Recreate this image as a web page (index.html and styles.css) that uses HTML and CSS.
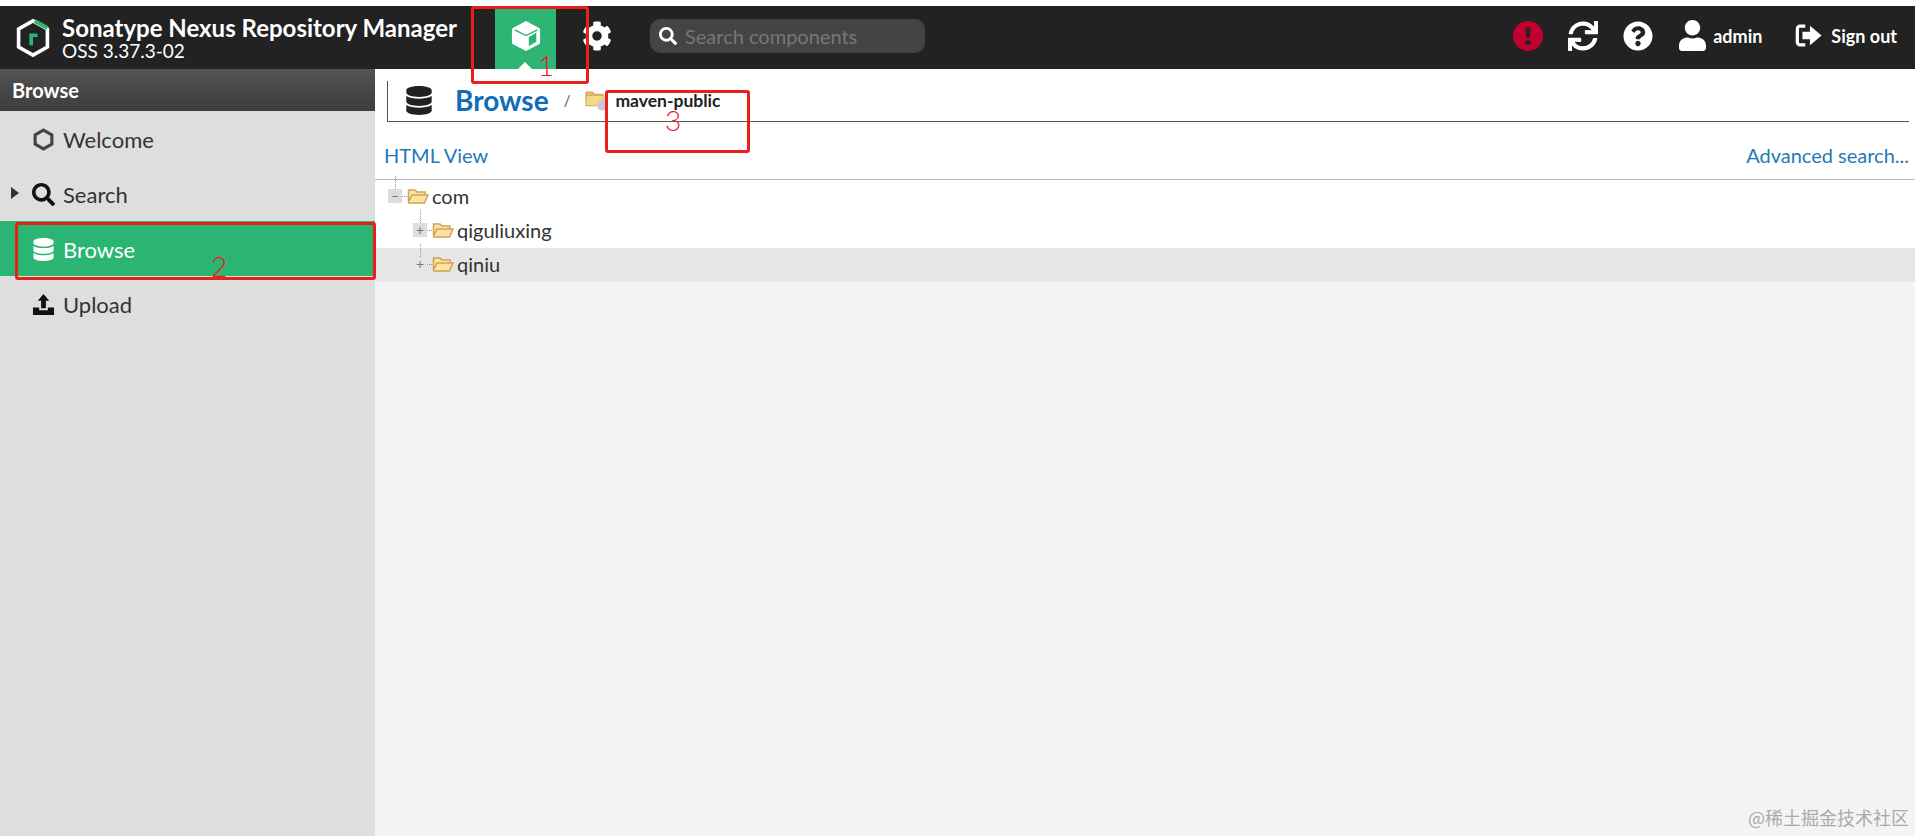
FILE: index.html
```html
<!DOCTYPE html>
<html lang="en">
<head>
  <meta charset="UTF-8">
  <title>Browse - Nexus Repository Manager</title>
  <link rel="stylesheet" href="styles.css">
</head>
<body>
  <!-- Top toolbar -->
  <header class="toolbar">
    <svg class="logo" viewBox="0 0 40 44">
      <path d="M20 3 36 12V32L20 41 4 32V12Z" fill="none" stroke="#fff" stroke-width="4"/>
      <path d="M22 3 36 11" fill="none" stroke="#2db573" stroke-width="4.5"/>
      <path d="M16 30V17H25V21H20V30Z" fill="#2db573"/>
    </svg>
    <div class="brand">
      <div class="brand-name">Sonatype Nexus Repository Manager</div>
      <div class="brand-version">OSS 3.37.3-02</div>
    </div>
    <div class="mode-tab">
      <svg class="icon-cube" viewBox="0 0 32 34">
        <path d="M16 1 30 8.500a2 2 0 0 1 1 1.700V24a2 2 0 0 1-1 1.700L16 33 2 25.700A2 2 0 0 1 1 24V10.200a2 2 0 0 1 1-1.700Z" fill="#fff"/>
        <path d="M19 18 27 13.500V23L19 28Z" fill="#2db573"/>
        <path d="M4 10.500 16 16.500 28 10.500" fill="none" stroke="#2db573" stroke-width="1.500"/>
      </svg>
    </div>
    <div class="mode-gear">
      <svg class="icon-gear" viewBox="0 0 512 512"><path fill="#fff" d="M487.4 315.7l-42.6-24.6c4.3-23.2 4.3-47 0-70.2l42.6-24.6c4.900-2.800 7.100-8.600 5.500-14-11.100-35.600-30-67.800-54.700-94.600-3.800-4.100-10-5.100-14.800-2.300L380.800 110c-17.900-15.400-38.500-27.300-60.800-35.100V25.800c0-5.600-3.900-10.500-9.400-11.700-36.700-8.200-74.300-7.800-109.200 0-5.500 1.200-9.400 6.100-9.400 11.700V75c-22.200 7.900-42.800 19.800-60.800 35.100L88.700 85.500c-4.900-2.800-11-1.900-14.800 2.300-24.700 26.700-43.600 58.900-54.700 94.600-1.700 5.400.6 11.200 5.500 14L67.300 221c-4.300 23.200-4.300 47 0 70.200l-42.600 24.600c-4.900 2.800-7.100 8.600-5.500 14 11.100 35.600 30 67.800 54.700 94.600 3.800 4.100 10 5.100 14.800 2.300l42.600-24.600c17.900 15.400 38.500 27.300 60.800 35.100v49.200c0 5.600 3.900 10.500 9.400 11.700 36.700 8.200 74.300 7.800 109.200 0 5.500-1.200 9.400-6.100 9.400-11.700v-49.200c22.200-7.900 42.800-19.800 60.800-35.100l42.600 24.600c4.900 2.800 11 1.900 14.800-2.300 24.700-26.700 43.600-58.900 54.700-94.600 1.500-5.500-.7-11.300-5.600-14.100zM256 336c-44.100 0-80-35.900-80-80s35.900-80 80-80 80 35.900 80 80-35.900 80-80 80z"/></svg>
    </div>
    <div class="search-box">
      <svg class="icon-18" viewBox="0 0 512 512"><path fill="#fff" d="M505 442.700L405.300 343c-4.500-4.500-10.600-7-17-7H372c27.600-35.300 44-79.700 44-128C416 93.100 322.900 0 208 0S0 93.100 0 208s93.100 208 208 208c48.300 0 92.700-16.400 128-44v16.300c0 6.400 2.500 12.500 7 17l99.700 99.700c9.400 9.400 24.600 9.400 33.900 0l28.300-28.300c9.400-9.400 9.400-24.600.1-34zM208 336c-70.700 0-128-57.200-128-128 0-70.700 57.200-128 128-128 70.700 0 128 57.200 128 128 0 70.700-57.200 128-128 128z"/></svg>
      <span class="search-text">Search components</span>
    </div>
    <div class="toolbar-right">
      <svg class="icon-alert" viewBox="0 0 30 30">
        <circle cx="15" cy="15" r="15" fill="#c0002f"/>
        <path d="M12.500 6.500H17.500L16.700 17H13.300Z" fill="#222"/>
        <circle cx="15" cy="21.500" r="2.600" fill="#222"/>
      </svg>
      <svg class="icon-sync" viewBox="0 0 512 512"><path fill="#fff" d="M440.650 12.570l4 82.770A247.160 247.160 0 0 0 255.830 8C134.730 8 33.910 94.920 12.290 209.820A12 12 0 0 0 24.090 224h49.050a12 12 0 0 0 11.670-9.260 175.910 175.910 0 0 1 317-56.940l-101.460-4.860a12 12 0 0 0-12.570 12v47.410a12 12 0 0 0 12 12H500a12 12 0 0 0 12-12V12a12 12 0 0 0-12-12h-47.370a12 12 0 0 0-11.980 12.570zM255.830 432a175.610 175.610 0 0 1-146-77.800l101.800 4.870a12 12 0 0 0 12.570-12v-47.400a12 12 0 0 0-12-12H12a12 12 0 0 0-12 12V500a12 12 0 0 0 12 12h47.350a12 12 0 0 0 12-12.600l-4.150-82.570A247.170 247.170 0 0 0 255.830 504c121.110 0 221.930-86.920 243.550-201.820a12 12 0 0 0-11.800-14.180h-49.050a12 12 0 0 0-11.670 9.260A175.860 175.860 0 0 1 255.830 432z"/></svg>
      <svg class="icon-help" viewBox="0 0 512 512"><path fill="#fff" d="M504 256c0 136.997-111.043 248-248 248S8 392.997 8 256C8 119.083 119.043 8 256 8s248 111.083 248 248zM262.655 90c-54.497 0-89.255 22.957-116.549 63.758-3.536 5.286-2.353 12.415 2.715 16.258l34.699 26.310c5.205 3.947 12.621 3.008 16.665-2.122 17.864-22.658 30.113-35.797 57.303-35.797 20.429 0 45.698 13.148 45.698 32.958 0 14.976-12.363 22.667-32.534 33.976C247.128 238.528 216 254.941 216 296v4c0 6.627 5.373 12 12 12h56c6.627 0 12-5.373 12-12v-1.333c0-28.462 83.186-29.647 83.186-106.667 0-58.002-60.165-102-116.531-102zM256 338c-25.365 0-46 20.635-46 46 0 25.364 20.635 46 46 46s46-20.636 46-46c0-25.365-20.635-46-46-46z"/></svg>
      <svg class="icon-user" viewBox="0 0 448 512"><path fill="#fff" d="M224 256c70.700 0 128-57.300 128-128S294.700 0 224 0 96 57.300 96 128s57.300 128 128 128zm89.600 32h-16.700c-22.200 10.200-46.900 16-72.900 16s-50.600-5.800-72.900-16h-16.700C60.200 288 0 348.200 0 422.400V464c0 26.500 21.500 48 48 48h352c26.500 0 48-21.500 48-48v-41.600c0-74.200-60.200-134.400-134.400-134.400z"/></svg>
      <span class="tool-label label-admin">admin</span>
      <svg class="icon-signout" viewBox="0 0 30 26">
        <path d="M11 3H5.500A3 3 0 0 0 2.500 6V20A3 3 0 0 0 5.500 23H11" fill="none" stroke="#fff" stroke-width="3.500"/>
        <path d="M8 9H16V2.500L28.500 13 16 23.500V17H8Z" fill="#fff"/>
      </svg>
      <span class="tool-label">Sign out</span>
    </div>
  </header>

  <div class="layout">
    <!-- Left navigation -->
    <aside class="sidebar">
      <div class="sidebar-title">Browse</div>
      <div class="nav-item">
        <svg class="nav-icon" viewBox="2 1 20 22"><path d="M12 3 20 7.500V16.500L12 21 4 16.500V7.500Z" fill="none" stroke="#444" stroke-width="3"/></svg>
        <span>Welcome</span>
      </div>
      <div class="nav-item">
        <span class="nav-arrow"></span>
        <svg class="nav-icon" viewBox="0 0 512 512"><path fill="#111" d="M505 442.700L405.300 343c-4.500-4.500-10.600-7-17-7H372c27.600-35.300 44-79.700 44-128C416 93.100 322.900 0 208 0S0 93.100 0 208s93.100 208 208 208c48.300 0 92.700-16.400 128-44v16.300c0 6.400 2.500 12.500 7 17l99.700 99.700c9.400 9.400 24.600 9.400 33.900 0l28.300-28.300c9.400-9.400 9.400-24.600.1-34zM208 336c-70.700 0-128-57.200-128-128 0-70.700 57.200-128 128-128 70.700 0 128 57.200 128 128 0 70.700-57.200 128-128 128z"/></svg>
        <span>Search</span>
      </div>
      <div class="nav-item nav-active">
        <svg class="nav-icon" viewBox="0 0 448 512"><path fill="#fff" d="M448 73.143v45.714C448 159.143 347.667 192 224 192S0 159.143 0 118.857V73.143C0 32.857 100.333 0 224 0s224 32.857 224 73.143zM448 176v102.857C448 319.143 347.667 352 224 352S0 319.143 0 278.857V176c48.125 33.143 136.208 48.572 224 48.572S399.875 209.143 448 176zm0 160v102.857C448 479.143 347.667 512 224 512S0 479.143 0 438.857V336c48.125 33.143 136.208 48.572 224 48.572S399.875 369.143 448 336z"/></svg>
        <span>Browse</span>
      </div>
      <div class="nav-item">
        <svg class="nav-icon" viewBox="0 0 24 24"><path fill="#111" d="M12 1 18 8H14.500V16H9.500V8H6ZM1 15H7.500V18H16.500V15H23V23H1Z"/></svg>
        <span>Upload</span>
      </div>
    </aside>

    <!-- Main panel -->
    <main class="content">
      <div class="white-top">
        <div class="breadcrumb">
          <svg class="crumb-icon" viewBox="0 0 448 512"><path fill="#222" d="M448 73.143v45.714C448 159.143 347.667 192 224 192S0 159.143 0 118.857V73.143C0 32.857 100.333 0 224 0s224 32.857 224 73.143zM448 176v102.857C448 319.143 347.667 352 224 352S0 319.143 0 278.857V176c48.125 33.143 136.208 48.572 224 48.572S399.875 209.143 448 176zm0 160v102.857C448 479.143 347.667 512 224 512S0 479.143 0 438.857V336c48.125 33.143 136.208 48.572 224 48.572S399.875 369.143 448 336z"/></svg>
          <span class="crumb-title">Browse</span>
          <span class="crumb-sep">/</span>
          <svg class="crumb-folder" viewBox="0 0 22 20">
            <path d="M1 2H7L9 4H17V8H1Z" fill="#e8c26e" stroke="#cfa354"/>
            <path d="M1 5H18V15H1Z" fill="#f6d888" stroke="#d3a75a"/>
            <ellipse cx="16.500" cy="14.500" rx="5" ry="5" fill="#c6ccd2"/>
          </svg>
          <span class="crumb-repo">maven-public</span>
        </div>
        <div class="link-bar">
          <span class="link">HTML View</span>
          <span class="link">Advanced search...</span>
        </div>
      </div>
      <div class="tree">
        <div class="tree-row">
          <span class="tree-toggle toggle-box">&minus;</span>
          <svg class="folder" viewBox="0 0 22 18"><path d="M1.500 15V3H8L10 5H18V8H5L1.500 15 5 8H21L17.500 16H2Z" fill="#fbe3a4" stroke="#cfa354" stroke-width="1.500"/></svg>
          <span>com</span>
        </div>
        <div class="tree-row row-child">
          <span class="tree-toggle toggle-box">+</span>
          <svg class="folder" viewBox="0 0 22 18"><path d="M1.500 15V3H8L10 5H18V8H5L1.500 15 5 8H21L17.500 16H2Z" fill="#fbe3a4" stroke="#cfa354" stroke-width="1.500"/></svg>
          <span>qiguliuxing</span>
        </div>
        <div class="tree-row row-child row-selected">
          <span class="tree-toggle">+</span>
          <svg class="folder" viewBox="0 0 22 18"><path d="M1.500 15V3H8L10 5H18V8H5L1.500 15 5 8H21L17.500 16H2Z" fill="#fbe3a4" stroke="#cfa354" stroke-width="1.500"/></svg>
          <span>qiniu</span>
        </div>
      </div>
    </main>
  </div>

  <!-- Red annotations drawn over the screenshot -->
  <div class="mark mark-one"></div>
  <div class="mark mark-two"></div>
  <div class="mark mark-three"></div>
  <span class="mark-num num-one">1</span>
  <span class="mark-num num-two">2</span>
  <span class="mark-num num-three">3</span>
  <span class="watermark">@稀土掘金技术社区</span>
</body>
</html>
```

FILE: styles.css
```css
html, body {
  height: 100%;
}
body {
  margin: 0;
  padding-top: 6px;
  box-sizing: border-box;
  background-color: #fff;
  color: #333;
  font-family: "Lato", "Noto Sans", sans-serif;
  overflow: hidden;
}
svg {
  display: block;
  flex: none;
}

/* Toolbar */
.toolbar {
  display: flex;
  align-items: center;
  height: 63px;
  background-color: #222;
  color: #fff;
}
.logo {
  width: 36px;
  height: 42px;
  margin-left: 15px;
}
.brand {
  margin-left: 11px;
  width: 433px;
}
.brand-name {
  font-size: 24px;
  font-weight: 700;
  line-height: 26px;
}
.brand-version {
  font-size: 19px;
  line-height: 20px;
}
.mode-tab {
  position: relative;
  display: flex;
  align-items: center;
  justify-content: center;
  align-self: stretch;
  width: 61px;
  padding-bottom: 4px;
  box-sizing: border-box;
  background-color: #2db573;
}
.mode-tab::after {
  content: "";
  position: absolute;
  left: 23px;
  bottom: 0;
  border: 7px solid transparent;
  border-top: 0;
  border-bottom-color: #fff;
}
.icon-cube {
  width: 30px;
  height: 32px;
}
.mode-gear {
  width: 30px;
  margin-left: 26px;
  margin-bottom: 4px;
}
.icon-gear {
  width: 30px;
  height: 30px;
}
.search-box {
  display: flex;
  align-items: center;
  gap: 8px;
  width: 275px;
  height: 34px;
  margin-left: 38px;
  margin-bottom: 3px;
  padding-left: 9px;
  box-sizing: border-box;
  background-color: #444;
  border-radius: 10px;
}
.icon-18 {
  width: 18px;
  height: 18px;
}
.search-text {
  color: #777;
  font-size: 20px;
}
.toolbar-right {
  display: flex;
  align-items: center;
  margin-left: auto;
  margin-bottom: 4px;
  padding-right: 18px;
}
.icon-alert {
  width: 30px;
  height: 30px;
}
.icon-sync {
  width: 30px;
  height: 30px;
  margin-left: 25px;
}
.icon-help {
  width: 30px;
  height: 30px;
  margin-left: 25px;
}
.icon-user {
  width: 27px;
  height: 31px;
  margin-left: 26px;
}
.tool-label {
  font-size: 18px;
  font-weight: 700;
}
.label-admin {
  margin-left: 7px;
}
.icon-signout {
  width: 28px;
  height: 25px;
  margin-left: 33px;
  margin-right: 8px;
}

/* Page body */
.layout {
  display: flex;
  height: calc(100% - 63px);
}
.sidebar {
  width: 375px;
  flex: none;
  background-color: #dedede;
}
.sidebar-title {
  height: 42px;
  padding-left: 12px;
  background: linear-gradient(#535353, #3d3d3d);
  color: #fff;
  font-size: 20px;
  font-weight: 700;
  line-height: 42px;
}
.nav-item {
  position: relative;
  display: flex;
  align-items: center;
  gap: 8px;
  height: 55px;
  padding-left: 32px;
  padding-top: 1px;
  box-sizing: border-box;
  color: #333;
  font-size: 22px;
}
.nav-icon {
  width: 23px;
  height: 23px;
}
.nav-arrow {
  position: absolute;
  left: 11px;
  top: 21px;
  border: 6px solid transparent;
  border-right: 0;
  border-left: 8px solid #333;
}
.nav-active {
  background-color: #2bb573;
  color: #fff;
}

/* Main panel */
.content {
  flex: 1;
  background-color: #f4f4f4;
}
.white-top {
  height: 111px;
  background-color: #fff;
  border-bottom: 1px solid #bbb;
  box-sizing: border-box;
  padding: 12px 6px 0 12px;
}
.breadcrumb {
  display: flex;
  align-items: center;
  height: 41px;
  padding-bottom: 2px;
  box-sizing: border-box;
  border-left: 1px solid #555;
  border-bottom: 1px solid #555;
}
.crumb-icon {
  width: 26px;
  height: 29px;
  margin-left: 18px;
}
.crumb-title {
  margin-left: 23px;
  color: #0f6cb8;
  font-size: 28px;
  font-weight: 700;
}
.crumb-sep {
  margin-left: 15px;
  color: #555;
  font-size: 15px;
}
.crumb-folder {
  width: 23px;
  height: 21px;
  margin-left: 15px;
}
.crumb-repo {
  margin-left: 7px;
  color: #222;
  font-size: 17.5px;
  font-weight: 700;
}
.link-bar {
  display: flex;
  justify-content: space-between;
  align-items: center;
  height: 57px;
  padding-top: 9px;
  box-sizing: border-box;
  margin-left: -3px;
  font-size: 20px;
}
.link {
  color: #1f7ab8;
}

/* Tree */
.tree {
  background-color: #fff;
  font-size: 20px;
  color: #333;
}
.tree-row {
  display: flex;
  align-items: center;
  height: 34px;
  padding-left: 13px;
  padding-bottom: 2px;
  box-sizing: border-box;
}
.row-child {
  padding-left: 38px;
}
.row-selected {
  background-color: #e6e6e6;
}
.tree-toggle {
  position: relative;
  width: 14px;
  height: 14px;
  color: #777;
  font-size: 14px;
  line-height: 14px;
  text-align: center;
}
.tree-toggle::before {
  content: "";
  position: absolute;
  left: 7px;
  top: -13px;
  height: 13px;
  border-left: 1px dotted #999;
}
.tree-toggle::after {
  content: "";
  position: absolute;
  left: 14px;
  top: 7px;
  width: 5px;
  border-top: 1px dotted #999;
}
.toggle-box {
  background-color: #ddd;
}
.folder {
  width: 22px;
  height: 18px;
  margin-left: 5px;
  margin-right: 3px;
}

/* Annotations */
.mark {
  position: absolute;
  border: 3px solid #e8201a;
  border-radius: 3px;
  box-sizing: border-box;
}
.mark-one {
  left: 471px;
  top: 6px;
  width: 118px;
  height: 78px;
}
.mark-two {
  left: 15px;
  top: 222px;
  width: 361px;
  height: 58px;
}
.mark-three {
  left: 605px;
  top: 90px;
  width: 145px;
  height: 63px;
}
.mark-num {
  position: absolute;
  color: #e8201a;
  font-size: 28px;
  font-weight: 300;
  line-height: 28px;
}
.num-one {
  left: 538px;
  top: 51px;
}
.num-two {
  left: 211px;
  top: 252px;
}
.num-three {
  left: 665px;
  top: 106px;
}
.watermark {
  position: absolute;
  right: 6px;
  bottom: 6px;
  color: #aaa;
  font-family: "Noto Sans CJK SC", sans-serif;
  font-size: 18px;
}
```
